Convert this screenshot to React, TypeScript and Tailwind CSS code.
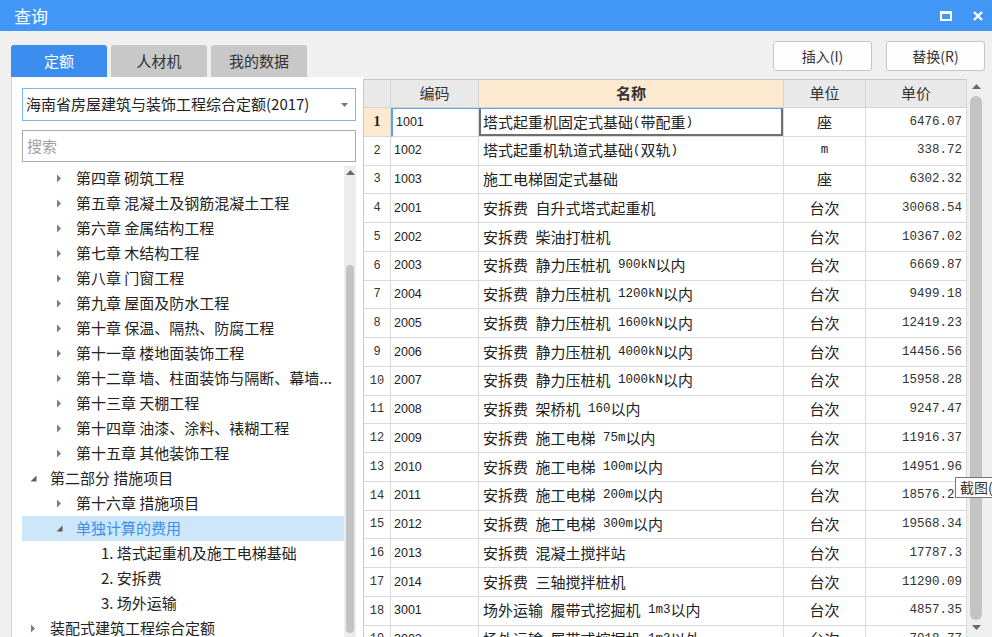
const rows: [string, string, string, string][] = [
  ["1001", "塔式起重机固定式基础(带配重)", "座", "6476.07"],
  ["1002", "塔式起重机轨道式基础(双轨)", "m", "338.72"],
  ["1003", "施工电梯固定式基础", "座", "6302.32"],
  ["2001", "安拆费 自升式塔式起重机", "台次", "30068.54"],
  ["2002", "安拆费 柴油打桩机", "台次", "10367.02"],
  ["2003", "安拆费 静力压桩机 900kN以内", "台次", "6669.87"],
  ["2004", "安拆费 静力压桩机 1200kN以内", "台次", "9499.18"],
  ["2005", "安拆费 静力压桩机 1600kN以内", "台次", "12419.23"],
  ["2006", "安拆费 静力压桩机 4000kN以内", "台次", "14456.56"],
  ["2007", "安拆费 静力压桩机 1000kN以内", "台次", "15958.28"],
  ["2008", "安拆费 架桥机 160以内", "台次", "9247.47"],
  ["2009", "安拆费 施工电梯 75m以内", "台次", "11916.37"],
  ["2010", "安拆费 施工电梯 100m以内", "台次", "14951.96"],
  ["2011", "安拆费 施工电梯 200m以内", "台次", "18576.26"],
  ["2012", "安拆费 施工电梯 300m以内", "台次", "19568.34"],
  ["2013", "安拆费 混凝土搅拌站", "台次", "17787.3"],
  ["2014", "安拆费 三轴搅拌桩机", "台次", "11290.09"],
  ["3001", "场外运输 履带式挖掘机 1m3以内", "台次", "4857.35"],
  ["3002", "场外运输 履带式挖掘机 1m3以外", "台次", "7018.77"],
];

type Node = { lvl: 0 | 1 | 2; state?: "c" | "e"; text: string; sel?: boolean };

const tree: Node[] = [
  { lvl: 1, state: "c", text: "第四章 砌筑工程" },
  { lvl: 1, state: "c", text: "第五章 混凝土及钢筋混凝土工程" },
  { lvl: 1, state: "c", text: "第六章 金属结构工程" },
  { lvl: 1, state: "c", text: "第七章 木结构工程" },
  { lvl: 1, state: "c", text: "第八章 门窗工程" },
  { lvl: 1, state: "c", text: "第九章 屋面及防水工程" },
  { lvl: 1, state: "c", text: "第十章 保温、隔热、防腐工程" },
  { lvl: 1, state: "c", text: "第十一章 楼地面装饰工程" },
  { lvl: 1, state: "c", text: "第十二章 墙、柱面装饰与隔断、幕墙..." },
  { lvl: 1, state: "c", text: "第十三章 天棚工程" },
  { lvl: 1, state: "c", text: "第十四章 油漆、涂料、裱糊工程" },
  { lvl: 1, state: "c", text: "第十五章 其他装饰工程" },
  { lvl: 0, state: "e", text: "第二部分 措施项目" },
  { lvl: 1, state: "c", text: "第十六章 措施项目" },
  { lvl: 1, state: "e", text: "单独计算的费用", sel: true },
  { lvl: 2, text: "1. 塔式起重机及施工电梯基础" },
  { lvl: 2, text: "2. 安拆费" },
  { lvl: 2, text: "3. 场外运输" },
  { lvl: 0, state: "c", text: "装配式建筑工程综合定额" },
];

const indent = { 0: "pl-[8px]", 1: "pl-[34px]", 2: "pl-[79px]" };

// latin runs in the grid are half-width, like SimSun
function Mixed({ text }: { text: string }) {
  const parts = text.split(/([\u0000-\u00ff]+)/);
  return (
    <>
      {parts.map((p, i) =>
        i % 2 === 1 ? (
          <span key={i} className="font-['Liberation_Mono',monospace] text-[12.5px]">
            {p}
          </span>
        ) : (
          p
        )
      )}
    </>
  );
}

function Arrow({ state }: { state?: "c" | "e" }) {
  if (state === "c")
    return (
      <svg width="6" height="9" viewBox="0 0 6 9">
        <path d="M1 0.5 L5 4.5 L1 8.5 Z" fill="#7d7d7d" />
      </svg>
    );
  if (state === "e")
    return (
      <svg width="7" height="7" viewBox="0 0 7 7">
        <path d="M6.5 0.5 L6.5 6.5 L0.5 6.5 Z" fill="#5e5e5e" />
      </svg>
    );
  return null;
}

function UpArrow() {
  return (
    <svg width="9" height="5" viewBox="0 0 9 5">
      <path d="M0 5 L4.5 0 L9 5 Z" fill="#6a6a6a" />
    </svg>
  );
}

function DownArrow() {
  return (
    <svg width="9" height="5" viewBox="0 0 9 5">
      <path d="M0 0 L4.5 5 L9 0 Z" fill="#6a6a6a" />
    </svg>
  );
}

export default function App() {
  return (
    <div className="relative w-[992px] h-[637px] overflow-hidden bg-[#f0f0f0] font-['Noto_Sans_CJK_SC',sans-serif] flex flex-col">
      {/* title bar */}
      <div className="h-[31px] bg-[#4296f5] flex items-center shrink-0">
        <span className="pl-[14px] text-[17px] text-white">查询</span>
        <div className="ml-auto flex items-center gap-[21px] pr-[9px]">
          <svg width="12" height="10" viewBox="0 0 12 10">
            <rect x="1" y="1.5" width="10" height="7.5" fill="none" stroke="white" strokeWidth="2" />
            <rect x="0" y="0" width="12" height="3" fill="white" />
          </svg>
          <svg width="10" height="10" viewBox="0 0 10 10">
            <path d="M1 1 L9 9 M9 1 L1 9" stroke="white" strokeWidth="2.4" />
          </svg>
        </div>
      </div>

      <div className="flex flex-1 min-h-0">
        {/* left side */}
        <div className="ml-[11px] w-[352px] flex flex-col">
          <div className="flex gap-[4px] pt-[14px] h-[46px] shrink-0">
            <div className="w-[96px] h-[32px] rounded-t-[3px] bg-[#3b8ef0] text-white text-[15px] flex items-center justify-center">
              定额
            </div>
            <div className="w-[96px] h-[32px] rounded-t-[3px] bg-[#c8c8c8] text-[#333] text-[15px] flex items-center justify-center">
              人材机
            </div>
            <div className="w-[96px] h-[32px] rounded-t-[3px] bg-[#c8c8c8] text-[#333] text-[15px] flex items-center justify-center">
              我的数据
            </div>
          </div>
          <div className="flex-1 min-h-0 bg-white border-l border-[#d2d2d2] pl-[10px] pr-[7px] flex flex-col">
            <div className="mt-[11px] h-[33px] border border-[#7fb5ec] flex items-center pl-[3px] pr-[7px] shrink-0">
              <span className="text-[15px] text-[#222]">海南省房屋建筑与装饰工程综合定额(2017)</span>
              <svg className="ml-auto" width="7" height="4" viewBox="0 0 7 4">
                <path d="M0 0 L3.5 4 L7 0 Z" fill="#777" />
              </svg>
            </div>
            <div className="mt-[9px] h-[32px] border border-[#a9a9a9] flex items-center pl-[4px] text-[15px] text-[#a0a0a0] shrink-0">
              搜索
            </div>
            <div className="mt-[4px] flex flex-1 min-h-0">
              <div className="flex-1 overflow-hidden">
                {tree.map((n, i) => (
                  <div
                    key={i}
                    className={
                      "flex h-[25px] items-center text-[15px] whitespace-nowrap " +
                      indent[n.lvl] +
                      (n.sel ? " bg-[#cde6fa] text-[#3d8fe8]" : " text-[#222]")
                    }
                  >
                    {n.lvl < 2 && (
                      <span className="w-[20px] flex items-center">
                        <Arrow state={n.state} />
                      </span>
                    )}
                    <span>{n.text}</span>
                  </div>
                ))}
              </div>
              <div className="w-[12px] bg-[#ececec] flex flex-col items-center">
                <div className="h-[12px] flex items-center">
                  <UpArrow />
                </div>
                <div className="mt-[87px] w-[8px] h-[368px] rounded-full bg-[#c3c3c3]" />
              </div>
            </div>
          </div>
        </div>

        {/* right side */}
        <div className="flex-1 pr-[7px] flex flex-col">
          <div className="pt-[10px] flex justify-end gap-[14px] shrink-0">
            <button className="w-[99px] h-[30px] rounded-[3px] border border-[#c6c6c6] bg-[#fdfdfd] text-[14px] text-[#333]">
              插入(I)
            </button>
            <button className="w-[99px] h-[30px] rounded-[3px] border border-[#c6c6c6] bg-[#fdfdfd] text-[14px] text-[#333]">
              替换(R)
            </button>
          </div>
          <div className="mt-[8px] flex flex-1 min-h-0">
            <div className="flex-1 bg-white border-l border-t border-[#c9c9c9] overflow-hidden">
              <div className="flex h-[28px] text-[15px] text-[#333]">
                <div className="w-[27px] bg-[#e9e9e9] border-r border-b border-[#d4d4d4]" />
                <div className="w-[88px] bg-[#e9e9e9] border-r border-b border-[#d4d4d4] flex items-center justify-center">编码</div>
                <div className="w-[305px] bg-[#fde9cf] border-r border-b border-[#d4d4d4] flex items-center justify-center font-bold">名称</div>
                <div className="w-[82px] bg-[#e9e9e9] border-r border-b border-[#d4d4d4] flex items-center justify-center">单位</div>
                <div className="w-[101px] bg-[#e9e9e9] border-r border-b border-[#d4d4d4] flex items-center justify-center">单价</div>
              </div>
              {rows.map((r, i) => (
                <div key={i} className="flex h-[28.75px] text-[#222]">
                  <div
                    className={
                      "w-[27px] border-r border-b border-[#dadada] flex items-center justify-center " +
                      (i === 0
                        ? "bg-[#fde9cf] font-['Liberation_Serif',serif] font-bold text-[14px]"
                        : "font-['Liberation_Mono',monospace] text-[12px] text-[#333]")
                    }
                  >
                    {i + 1}
                  </div>
                  <div
                    className={
                      "w-[88px] border-r border-b border-[#dadada] flex items-center pl-[3px] font-['Liberation_Sans',sans-serif] text-[12.5px] " +
                      (i === 0 ? "border-t border-t-[#5da2f2] border-l-2 border-l-[#5da2f2]" : "")
                    }
                  >
                    {r[0]}
                  </div>
                  <div className="relative w-[305px] border-r border-b border-[#dadada] flex items-center pl-[4px] text-[15px] whitespace-pre">
                    <Mixed text={r[1]} />
                    {i === 0 && (
                      <span className="absolute inset-0 border-2 border-[#6f6f6f] border-t border-t-[#5da2f2]" />
                    )}
                  </div>
                  <div className="w-[82px] border-r border-b border-[#dadada] flex items-center justify-center text-[15px]">
                    <Mixed text={r[2]} />
                  </div>
                  <div className="w-[101px] border-r border-b border-[#dadada] flex items-center justify-end pr-[4px] font-['Liberation_Mono',monospace] text-[12.5px] text-[#333]">
                    {r[3]}
                  </div>
                </div>
              ))}
            </div>
            <div className="w-[18px] bg-[#efefef] flex flex-col items-center">
              <div className="h-[15px] flex items-center">
                <UpArrow />
              </div>
              <div className="mt-[2px] w-[12px] h-[524px] rounded-full bg-[#c3c3c3]" />
              <div className="mt-[5px]">
                <DownArrow />
              </div>
            </div>
          </div>
        </div>
      </div>

      {/* tooltip */}
      <div className="absolute left-[955px] top-[477px] h-[21px] w-[60px] bg-white border border-[#767676] text-[14px] text-[#333] flex items-center pl-[4px]">
        截图(
      </div>
    </div>
  );
}
